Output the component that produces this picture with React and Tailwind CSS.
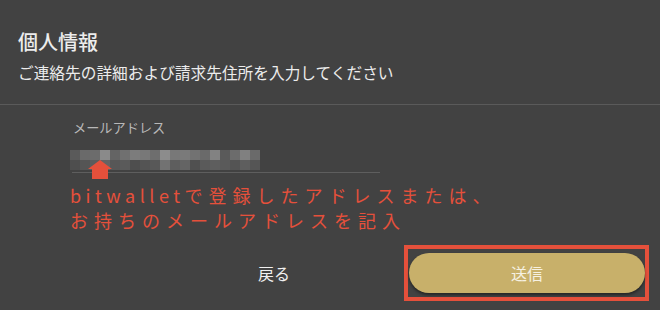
import React from "react";

const row1 = ["#5a5a5a","#6a6a6a","#6c6c6c","#8a8a8a","#646464","#707070","#7c7c7c","#787878","#6e6e6e","#8c8c8c","#787878","#7a7a7a","#727272","#6a6a6a","#828282","#5a5a5a","#6c6c6c","#808080","#6a6a6a"];
const row2 = ["#4e4e4e","#555555","#5c5c5c","#646464","#575757","#5a5a5a","#4e4e4e","#545454","#585858","#727272","#5e5e5e","#646464","#505050","#5a5a5a","#5e5e5e","#5a5a5a","#545454","#5e5e5e","#555555"];

export default function App() {
  return (
    <div
      className="relative w-[660px] h-[310px] overflow-hidden bg-[#424242]"
      style={{ fontFamily: '"Noto Sans CJK JP", "Noto Sans", sans-serif' }}
    >
      <div className="pl-[18px] pt-[28px]">
        <div className="text-[20px] leading-[28px] font-medium text-[#ececec]">個人情報</div>
        <div className="mt-[7px] text-[15.7px] leading-[20px] text-[#ececec]">
          ご連絡先の詳細および請求先住所を入力してください
        </div>
      </div>
      <div className="mt-[21px] h-px bg-[#5a5a5a]" />
      <div className="pl-[70px]">
        <div className="mt-[14px] pl-[3px] text-[13.2px] leading-[18px] text-[#b8b8b8]">メールアドレス</div>
        <div className="relative mt-[13px] w-[190px]">
          <div className="flex">
            {row1.map((c, i) => (
              <div key={i} className="w-[10px] h-[10px]" style={{ backgroundColor: c }} />
            ))}
          </div>
          <div className="flex">
            {row2.map((c, i) => (
              <div key={i} className="w-[10px] h-[10px]" style={{ backgroundColor: c }} />
            ))}
          </div>
          <svg className="absolute left-[18px] top-[10px]" width="24" height="19" viewBox="0 0 24 19">
            <polygon points="12,0 24,9 0,9" fill="#e5503b" />
            <rect x="4" y="8.5" width="16" height="10.5" fill="#e5503b" />
          </svg>
        </div>
        <div className="mt-[2px] ml-[2px] w-[308px] h-px bg-[#5e5e5e]" />
        <div className="mt-[9.5px] text-[18px] leading-[25px] tracking-[6px] text-[#e5503b]">
          <div><span className="tracking-[4.5px]">bitwallet</span>で登録したアドレスまたは、</div>
          <div>お持ちのメールアドレスを記入</div>
        </div>
      </div>
      <div className="mt-[12.5px] flex items-center">
        <div className="ml-[144px] w-[260px] text-center text-[16px] leading-[22px] text-[#f0f0f0]">戻る</div>
        <div className="w-[245px] h-[56px] border-4 border-[#e5503b] pl-[1px] pt-[4px]">
          <div className="w-[236px] h-[40px] rounded-full bg-[#c8b06a] shadow-[0_2px_3px_rgba(0,0,0,0.45)] flex items-center justify-center text-[16px] text-[#f6f1e2]">
            送信
          </div>
        </div>
      </div>
    </div>
  );
}
